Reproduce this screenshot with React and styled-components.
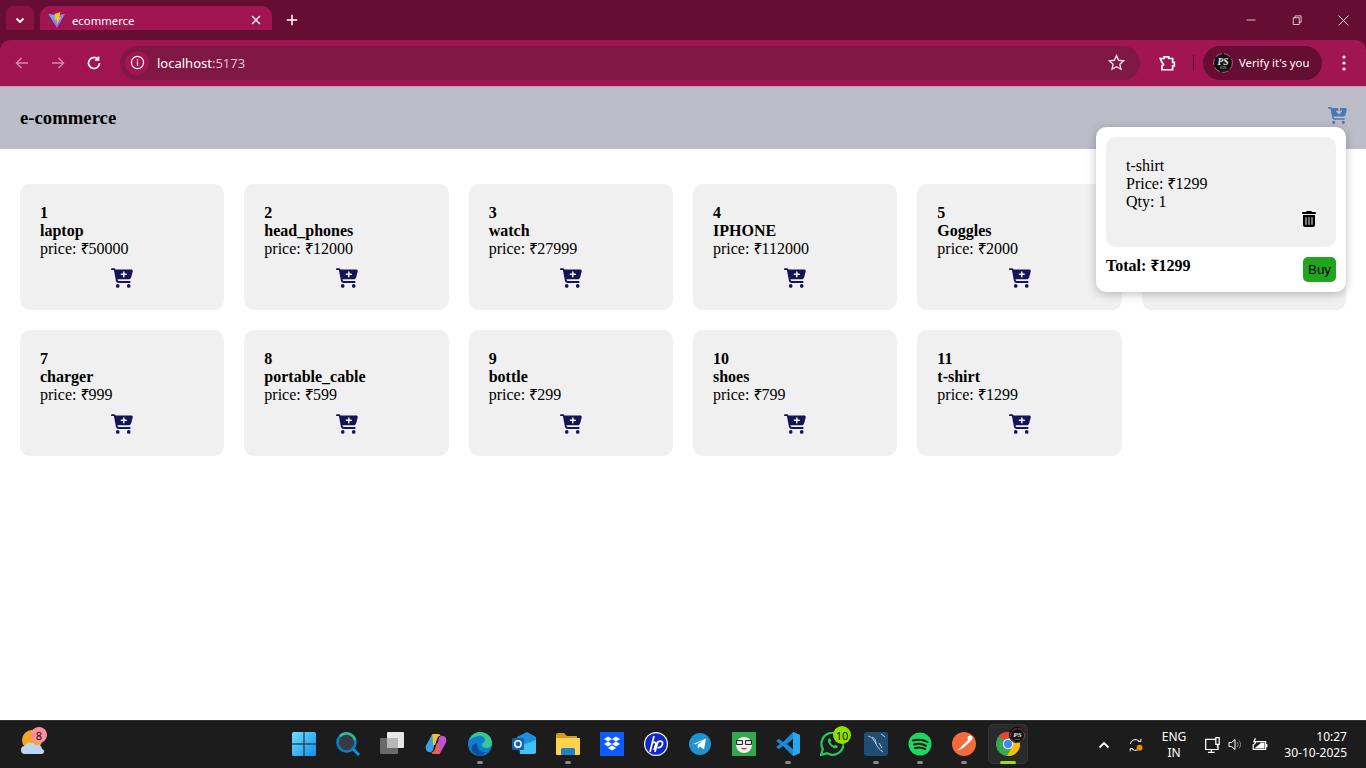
import React from 'react';
import styled, { createGlobalStyle } from 'styled-components';
import { FaCartPlus, FaCartArrowDown, FaTrashCan } from 'react-icons/fa6';

const Global = createGlobalStyle`
  html, body { margin: 0; padding: 0; height: 100%; overflow: hidden; background: #fff; }
  #root { height: 768px; }
  * { box-sizing: border-box; }
`;

const Screen = styled.div`
  width: 1366px; height: 768px; display: flex; flex-direction: column;
  font-family: "Liberation Serif", "Noto Sans", serif; color: #000;
`;

/* ---------- browser chrome ---------- */
const TabStrip = styled.div`
  height: 40px; background: #660d33; display: flex; align-items: flex-end;
  padding-left: 6px; flex: none;
`;
const TabSearch = styled.div`
  width: 28px; height: 28px; margin: 0 6px 6px 0; border-radius: 8px; background: #8a1243;
  display: flex; align-items: center; justify-content: center; flex: none;
`;
const Tab = styled.div`
  position: relative; width: 232px; height: 34px; background: #a11650; border-radius: 10px 10px 0 0;
  display: flex; align-items: center; padding: 0 9px 6px 8px; gap: 6px; flex: none;
  font: 11.3px "Noto Sans", "Open Sans", sans-serif; color: #fff;
  &::before, &::after {
    content: ""; position: absolute; bottom: 0; width: 8px; height: 8px;
  }
  &::before { left: -8px; background: radial-gradient(circle at 0 0, transparent 8px, #a11650 8.5px); }
  &::after { right: -8px; background: radial-gradient(circle at 100% 0, transparent 8px, #a11650 8.5px); }
`;
const TabTitle = styled.span`flex: 1;`;
const NewTab = styled.div`
  width: 40px; height: 34px; padding-bottom: 6px; display: flex; align-items: center; justify-content: center; flex: none;
`;
const WindowControls = styled.div`
  margin-left: auto; display: flex; height: 40px; align-items: center;
`;
const WinButton = styled.div`
  width: 46px; height: 40px; display: flex; align-items: center; justify-content: center;
`;
const Toolbar = styled.div`
  height: 47px; background: #a11650; display: flex; align-items: center; flex: none;
  border-radius: 10px 10px 0 0; padding: 0 0 1px 4px; position: relative;
  border-bottom: 1px solid #c69ab0;
  box-shadow: 0 -10px 0 0 #660d33;
`;
const NavButton = styled.div`
  width: 36px; height: 34px; display: flex; align-items: center; justify-content: center; flex: none;
`;
const Omnibox = styled.div`
  margin-left: 8px; width: 1020px; height: 34px; border-radius: 17px; background: #801845;
  display: flex; align-items: center; padding: 0 15px 0 5px; flex: none;
  font: 13px "Noto Sans", "Open Sans", sans-serif; color: #fff;
`;
const SiteChip = styled.div`
  width: 24px; height: 24px; border-radius: 50%; background: #a11650; margin-right: 8px;
  display: flex; align-items: center; justify-content: center; flex: none;
`;
const Port = styled.span`color: #e0bccb;`;
const OmniEnd = styled.div`margin-left: auto; display: flex; align-items: center;`;
const ExtButton = styled.div`
  width: 36px; margin-left: 9px; display: flex; justify-content: center; flex: none;
`;
const ToolbarDivider = styled.div`
  width: 1px; height: 16px; background: #660d33; margin: 0 9px 0 8px; flex: none;
`;
const Profile = styled.div`
  width: 119px; height: 34px; border-radius: 17px; background: #660d33; flex: none;
  display: flex; align-items: center; padding-left: 10px; gap: 6px;
  font: 11.3px "Noto Sans", "Open Sans", sans-serif; color: #fff; white-space: nowrap;
`;
const MenuDots = styled.div`
  margin-left: 4px; width: 36px; display: flex; justify-content: center; flex: none;
`;

/* ---------- page ---------- */
const Page = styled.div`position: relative; flex: 1; background: #fff; min-height: 0;`;
const Header = styled.header`
  height: 62px; background: #bdbdc9; display: flex; align-items: center; justify-content: space-between;
  padding: 0 20px;
`;
const Brand = styled.h3`margin: 0; font-size: 18.72px; font-weight: 700;`;
const HeaderCart = styled.div`color: #4a78b4; display: flex; margin-bottom: 6px; margin-right: -1px;`;
const Grid = styled.main`
  display: grid; grid-template-columns: repeat(6, 1fr); gap: 20px; padding: 35px 20px 0;
`;
const Card = styled.article`
  height: 126px; background: #f0f0f0; border-radius: 10px; padding: 20px; font-size: 16px; line-height: 18px;
`;
const Strong = styled.div`font-weight: 700;`;
const Rupee = styled.span`margin-right: -1px;`;
const CartBtn = styled.div`
  color: #14145a; display: flex; justify-content: center; margin-top: 9px; padding-left: 0.6px;
`;
const Popup = styled.aside`
  position: absolute; top: 40px; right: 20px; width: 250px; height: 165px; background: #fff; border-radius: 10px;
  box-shadow: 0 2px 10px rgba(0,0,0,.25); padding: 10px; z-index: 2;
`;
const PopupItem = styled.div`
  height: 110px; background: #f0f0f0; border-radius: 10px; padding: 20px 19px 20px 20px; font-size: 16px; line-height: 18px;
  display: flex; justify-content: space-between;
`;
const Trash = styled.div`align-self: flex-end; display: flex;`;
const PopupFoot = styled.div`
  display: flex; justify-content: space-between; align-items: flex-start; margin-top: 10px;
`;
const Total = styled.div`font-weight: 700; font-size: 16px; line-height: 18px;`;
const BuyButton = styled.button`
  width: 33px; height: 25px; border: 0; padding: 0; background: #1fa51f; border-radius: 5px; color: #000;
  font: 13.33px "Liberation Sans", Arial, sans-serif;
`;

/* ---------- taskbar ---------- */
const Taskbar = styled.footer`
  height: 48px; background: #1c1c1c; border-top: 1px solid #333; display: flex; flex: none; position: relative;
`;
const Weather = styled.div`width: 282px; padding: 3px 0 0 20px; flex: none;`;
const Pinned = styled.div`display: flex; flex: none;`;
const Slot = styled.div`
  position: relative; width: 44px; height: 47px; display: flex; align-items: center; justify-content: center;
  padding-bottom: 1px;
`;
const IconHolder = styled.span`position: relative; display: flex;`;
const ActiveTile = styled.div`
  position: absolute; left: 2px; top: 3px; width: 40px; height: 40px; border-radius: 5px;
  background: #2a2a2a; border: 1px solid #333;
`;
const RunDot = styled.span`
  position: absolute; bottom: 4px; left: 50%; transform: translateX(-50%); height: 3px; border-radius: 2px;
  width: ${p => (p.$active ? 16 : 6)}px; background: ${p => (p.$active ? '#9be000' : '#8a8a8a')}; z-index: 1;
`;
const Tray = styled.div`
  margin-left: auto; display: flex; align-items: center; color: #fff; padding-right: 19px;
  font: 12px "Noto Sans", "Open Sans", sans-serif;
`;
const TrayIcon = styled.div`
  width: ${p => p.$w}px; display: flex; justify-content: center; flex: none;
`;
const Lang = styled.div`width: 40px; text-align: center; line-height: 15.5px; flex: none;`;
const Clock = styled.div`width: 77px; text-align: right; line-height: 16px; flex: none;`;
const Spacer = styled.div`width: ${p => p.$w}px; flex: none;`;

const Badge = styled.span`
  position: absolute; border-radius: 50%; display: flex; align-items: center; justify-content: center;
  font: 11px "Noto Sans", sans-serif; color: #111;
  width: ${p => p.$s}px; height: ${p => p.$s}px; background: ${p => p.$bg};
  left: ${p => p.$l}px; top: ${p => p.$t}px;
`;
const WeatherWrap = styled.div`position: relative; width: 30px; height: 30px; margin-top: 5px;`;

/* ---------- drawings ---------- */
const ViteLogo = () => (
  <svg width="18" height="18" viewBox="0 0 18 18" style={{ flex: 'none' }}>
    <defs>
      <linearGradient id="v1" x1="0" y1="0" x2="1" y2="1"><stop offset="0" stopColor="#41d1ff" /><stop offset="1" stopColor="#bd34fe" /></linearGradient>
    </defs>
    <path d="M0.5 3 L8 4.3 L17 3 L9 17 Z" fill="url(#v1)" />
    <path d="M6.5 3 L12.5 1 L11 6.5 L13 6 L8.5 14 L9 8.5 L6.8 9 Z" fill="#ffc517" />
  </svg>
);
const Chevron = ({ up }) => (
  <svg width="12" height="12" viewBox="0 0 12 12" fill="none" stroke="#fff" strokeWidth="1.8">
    <path d={up ? 'M1.5 8.5 L6 4 L10.5 8.5' : 'M2.5 4.5 L6 8 L9.5 4.5'} />
  </svg>
);
const Stroke = ({ w = 16, children, color = '#fff', sw = 1.5 }) => (
  <svg width={w} height={w} viewBox="0 0 16 16" fill="none" stroke={color} strokeWidth={sw}>{children}</svg>
);
const PSAvatar = ({ s = 20 }) => (
  <svg width={s} height={s} viewBox="0 0 20 20">
    <circle cx="10" cy="10" r="9.400" fill="#111" stroke="#c4567f" strokeWidth="1" strokeDasharray="7 2" />
    <text x="10" y="11.500" textAnchor="middle" fontFamily="Liberation Serif, serif" fontStyle="italic" fontWeight="700" fontSize="9.500" fill="#eee">PS</text>
    <text x="10" y="15.500" textAnchor="middle" fontFamily="Liberation Sans, sans-serif" fontSize="3" fill="#bbb">SITE</text>
  </svg>
);

const SIZE = 24;
const Svg = ({ children, size = SIZE }) => <svg width={size} height={size} viewBox="0 0 24 24">{children}</svg>;

const pinned = [
  { id: 'win', icon: <Svg><defs><linearGradient id="w" x1="0" y1="0" x2="1" y2="1"><stop offset="0" stopColor="#6fe0ff" /><stop offset="1" stopColor="#0f8df0" /></linearGradient></defs><path fill="url(#w)" d="M0 1.500a1.500 1.500 0 011.500-1.500H11.500V11.500H0zM12.500 0H22.500A1.500 1.500 0 0124 1.500V11.500H12.500zM0 12.500H11.500V24H1.500A1.500 1.500 0 010 22.500zM12.500 12.500H24V22.500A1.500 1.500 0 0122.500 24H12.500z" /></Svg> },
  { id: 'search', icon: <Svg><circle cx="10.500" cy="10.500" r="9" fill="#333c44" stroke="#0f7fc4" strokeWidth="2.600" /><path d="M4 4A9 9 0 0119 8" fill="none" stroke="#35b88a" strokeWidth="2.600" /><path d="M17 17L23 23" stroke="#1590d8" strokeWidth="3" /></Svg> },
  { id: 'view', icon: <Svg><rect x="7" y="0" width="17" height="16" rx="1" fill="#e8e8e8" /><rect x="0" y="6" width="18" height="16" rx="1" fill="#6a6a6a" /><rect x="7" y="6" width="11" height="10" fill="#b8b8b8" /></Svg> },
  { id: 'copilot', icon: <Svg size={22}><path d="M8 1h5L9 18c-.5 2-2 3-4 3-3 0-5-3-4-7z" fill="#3aa0e8" /><path d="M16 23h-5l4-17c.5-2 2-3 4-3 3 0 5 3 4 7z" fill="#c44fd8" /><path d="M8 1h6c2 0 3 1 3 2-2 0-3 1-4 4l-2 6-2 0z" fill="#f5c030" /><path d="M16 23h-6c-2 0-3-1-3-2 2 0 3-1 4-4l2-6 2 0z" fill="#f0604a" /></Svg> },
  { id: 'edge', dot: true, icon: <Svg><circle cx="12" cy="12" r="12" fill="#0f7fcb" /><path d="M1 9C3 2 9 0 12 0c7 0 12 5 12 11 0 4-3 5-5 5-3 0-5-1-5-3 0-3 3-2 3-5 0-3-4-5-7-4C5 5 2 7 1 9z" fill="#38c88e" /><path d="M9 12c0 5 4 9 9 8-2 3-6 4-9 3C4 21 2 16 5 13c1-1 3-2 4-1z" fill="#0b4f9c" /></Svg> },
  { id: 'outlook', icon: <Svg><path d="M5 5L15 0l9 5v14a3 3 0 01-3 3H8z" fill="#1c8fe0" /><path d="M8 14l16-6v12a2 2 0 01-2 2H8z" fill="#3fc3f3" /><rect x="0" y="6" width="12" height="12" rx="1.500" fill="#0f63b0" /><circle cx="6" cy="12" r="3.200" fill="none" stroke="#fff" strokeWidth="1.500" /></Svg> },
  { id: 'files', dot: true, icon: <Svg><path d="M0 3a2 2 0 012-2h6l3 3h10v5H0z" fill="#d89a18" /><path d="M0 6h24v16a1 1 0 01-1 1H1a1 1 0 01-1-1z" fill="#fdd34e" /><rect x="5" y="16" width="14" height="7" rx="1.500" fill="#1f7fc4" /></Svg> },
  { id: 'dropbox', icon: <Svg><rect width="24" height="24" fill="#0a5cff" /><path d="M8 4.500l4 2.500-4 2.500-4-2.500zM16 4.500l4 2.500-4 2.500-4-2.500zM8 9.500l4 2.500-4 2.500-4-2.500zM16 9.500l4 2.500-4 2.500-4-2.500zM12 13.500l4 2.500-4 2.500-4-2.500z" fill="#fff" /></Svg> },
  { id: 'hp', icon: <Svg><circle cx="12" cy="12" r="12" fill="#fff" /><circle cx="12" cy="12" r="10.800" fill="#1226c9" /><path d="M10 4L6 20M9 11c1-1 3-1 3 1l-2 6M14 9l-3 11M14 10c2-1.500 5-1 4.500 2s-3 4-5 3.500" fill="none" stroke="#fff" strokeWidth="1.700" /></Svg> },
  { id: 'telegram', icon: <Svg><circle cx="12" cy="12" r="11" fill="#1f92d0" /><path d="M5 12L18 6.500l-2 11-4-3-2 2.200-.5-3.700 6-5-7.500 4.300z" fill="#fff" /></Svg> },
  { id: 'emote', icon: <Svg><rect width="24" height="24" fill="#31a84e" /><circle cx="12" cy="13" r="8" fill="#f2f2f2" /><rect x="4" y="8" width="7" height="5" rx="1" fill="#222" /><rect x="13" y="8" width="7" height="5" rx="1" fill="#222" /><rect x="5" y="9" width="5" height="3" fill="#ddd" /><rect x="14" y="9" width="5" height="3" fill="#ddd" /><path d="M9 16c1 2 5 2 6 0z" fill="#c33" /></Svg> },
  { id: 'vscode', dot: true, icon: <Svg><path d="M17 0l7 3v18l-7 3L7 14l-4 3-3-2 4-3-4-3 3-2 4 3z" fill="#1c87d8" /><path d="M17 0l7 3v18l-7 3z" fill="#2aa5ee" /><path d="M17 7l-6 5 6 5z" fill="#1c1c1c" /></Svg> },
  { id: 'whatsapp', badge: '10', icon: <Svg><path d="M1 23l1.800-6A11 11 0 1 1 7 21.300z" fill="#1c1c1c" stroke="#25c85a" strokeWidth="2.200" /><path d="M8 7c1-1 2-1 2.500 0l.8 2-1 1.300c.6 1.500 2 2.800 3.400 3.400l1.300-1 2 .8c1 .5 1 1.500 0 2.500-3 2-11-5-8.800-8.800z" fill="#25c85a" /></Svg> },
  { id: 'mysql', dot: true, icon: <Svg><rect width="24" height="24" rx="3" fill="#1f4e74" /><path d="M4 4c4 1 6 4 8 8s4 6 7 8M12 12c0-3-1-6-4-7M17 2l4 3M15 11l3 5" fill="none" stroke="#b9cfdf" strokeWidth="1" /></Svg> },
  { id: 'spotify', dot: true, icon: <Svg><circle cx="12" cy="12" r="11.500" fill="#1ed760" /><path d="M5 8.500c5-1.500 10-1 14.500 1.500M6 12.500c4-1 8.500-.8 12 1.300M7 16c3.500-.8 7-.5 10 1" fill="none" stroke="#1c1c1c" strokeWidth="2" strokeLinecap="round" /></Svg> },
  { id: 'postman', dot: true, icon: <Svg><circle cx="12" cy="12" r="12" fill="#f26b3a" /><path d="M5 19L17 7l2 2-8 7z" fill="#fff" /><circle cx="18" cy="6" r="2.500" fill="#fff" /></Svg> },
  { id: 'chrome', active: true, icon: (
    <Svg>
      <circle cx="12" cy="12" r="12" fill="#34a853" />
      <path d="M12 0a12 12 0 0110.400 6H12a6 6 0 00-5.200 3L3 3.500A12 12 0 0112 0z" fill="#ea4335" />
      <path d="M22.400 6A12 12 0 0111 24l5.200-9A6 6 0 0012 6z" fill="#fbbc04" />
      <circle cx="12" cy="12" r="5.200" fill="#fff" /><circle cx="12" cy="12" r="4.200" fill="#4285f4" />
    </Svg>
  ) },
];

/* The sixth card lies behind the cart popup: only its bottom edge shows, so it holds no text. */
const products = [
  [1, 'laptop', 50000], [2, 'head_phones', 12000], [3, 'watch', 27999], [4, 'IPHONE', 112000],
  [5, 'Goggles', 2000], [6, null, null], [7, 'charger', 999], [8, 'portable_cable', 599],
  [9, 'bottle', 299], [10, 'shoes', 799], [11, 't-shirt', 1299],
];

export default function App() {
  return (
    <Screen>
      <Global />
      <TabStrip>
        <TabSearch><Chevron /></TabSearch>
        <Tab>
          <ViteLogo />
          <TabTitle>ecommerce</TabTitle>
          <Stroke w={14}><path d="M3.500 3.500l9 9M12.500 3.500l-9 9" /></Stroke>
        </Tab>
        <NewTab><Stroke w={14} sw={1.700}><path d="M8 2v12M2 8h12" /></Stroke></NewTab>
        <WindowControls>
          <WinButton><Stroke w={12} sw={1}><path d="M2 8h12" /></Stroke></WinButton>
          <WinButton><Stroke w={12} sw={1}><path d="M3 5h8v9H3zM5.500 5V2.500h8V11H11" /></Stroke></WinButton>
          <WinButton><Stroke w={13} sw={1.100}><path d="M2 2l12 12M14 2L2 14" /></Stroke></WinButton>
        </WindowControls>
      </TabStrip>
      <Toolbar>
        <NavButton><Stroke color="#cf88a6"><path d="M14 8H2.500M7.500 3l-5 5 5 5" /></Stroke></NavButton>
        <NavButton><Stroke color="#cf88a6"><path d="M2 8h11.500M8.500 3l5 5-5 5" /></Stroke></NavButton>
        <NavButton><Stroke sw={1.700}><path d="M13.500 8A5.500 5.500 0 1 1 11.800 4M12.500 1.500V5H9" /></Stroke></NavButton>
        <Omnibox>
          <SiteChip><Stroke w={15} sw={1.300}><circle cx="8" cy="8" r="6.500" /><path d="M8 7v4.500M8 4.300v1.500" /></Stroke></SiteChip>
          <span>localhost<Port>:5173</Port></span>
          <OmniEnd><Stroke w={17} sw={1.300} color="#eedbe3"><path d="M8 1.500l2 4.400 4.700.5-3.500 3.200 1 4.700L8 12l-4.200 2.300 1-4.700L1.300 6.400 6 5.900z" /></Stroke></OmniEnd>
        </Omnibox>
        <ExtButton><Stroke w={18} sw={1.500}><path d="M2 4h3.500V2.500h4V4H13v3.500h1.500v3H13V14H3.500v-3.500L5 9.500 3 6.500z" /></Stroke></ExtButton>
        <ToolbarDivider />
        <Profile><PSAvatar /><span>Verify it's you</span></Profile>
        <MenuDots><svg width="4" height="16" viewBox="0 0 4 16" fill="#fff"><circle cx="2" cy="2" r="1.600" /><circle cx="2" cy="8" r="1.600" /><circle cx="2" cy="14" r="1.600" /></svg></MenuDots>
      </Toolbar>

      <Page>
        <Header>
          <Brand>e-commerce</Brand>
          <HeaderCart><FaCartArrowDown size={19} /></HeaderCart>
        </Header>
        <Grid>
          {products.map(([id, name, price]) => (
            <Card key={id}>
              {name && (
                <>
                  <Strong>{id}</Strong>
                  <Strong>{name}</Strong>
                  <div>price: <Rupee>₹</Rupee>{price}</div>
                  <CartBtn><FaCartPlus size={22} /></CartBtn>
                </>
              )}
            </Card>
          ))}
        </Grid>
        <Popup>
          <PopupItem>
            <div>t-shirt<br />Price: <Rupee>₹</Rupee>1299<br />Qty: 1</div>
            <Trash><FaTrashCan size={16} /></Trash>
          </PopupItem>
          <PopupFoot>
            <Total>Total: <Rupee>₹</Rupee>1299</Total>
            <BuyButton>Buy</BuyButton>
          </PopupFoot>
        </Popup>
      </Page>

      <Taskbar>
        <Weather>
          <WeatherWrap>
            <svg width="26" height="26" viewBox="0 0 26 26">
              <circle cx="12" cy="11" r="10" fill="#f5a623" />
              <path d="M5 25a4 4 0 010-8c1-4 8-5 10-1 4-1 7 1 7 4a2.500 2.500 0 01-1 5z" fill="#bcd6f2" />
            </svg>
            <Badge $s={16} $bg="#ff8f9a" $l={11} $t={-2}>8</Badge>
          </WeatherWrap>
        </Weather>
        <Pinned>
          {pinned.map(p => (
            <Slot key={p.id}>
              {p.active && <ActiveTile />}
              <IconHolder>{p.icon}</IconHolder>
              {p.badge && <Badge $s={18} $bg="#8fe000" $l={23} $t={5}>{p.badge}</Badge>}
              {p.active && <Badge $s={16} $bg="#000" $l={23} $t={6}><PSAvatar s={15} /></Badge>}
              {(p.dot || p.active) && <RunDot $active={p.active} />}
            </Slot>
          ))}
        </Pinned>
        <Tray>
          <TrayIcon $w={16}><Chevron up /></TrayIcon>
          <Spacer $w={16} />
          <TrayIcon $w={16}>
            <svg width="22" height="22" viewBox="0 0 18 18" fill="none" stroke="#fff" strokeWidth="1.100">
              <path d="M2.500 8a6 6 0 0110-3.500M14.500 2v3h-3M11 14.500A6 6 0 014.500 13.500M2.500 16v-3h3" />
              <circle cx="13" cy="12" r="3.300" fill="#f08a10" stroke="none" />
            </svg>
          </TrayIcon>
          <Spacer $w={10} />
          <Lang>ENG<br />IN</Lang>
          <Spacer $w={9} />
          <TrayIcon $w={20}><Stroke w={18} sw={1.100}><path d="M10 3H1.500v9h11V8M3.500 14.500h6M6.500 12v2.500M10.500 1.500h3v6h-3zM12 7.500v3" /></Stroke></TrayIcon>
          <Spacer $w={4} />
          <TrayIcon $w={16}><Stroke w={17} sw={1}><path d="M2 6v4h2.500L8 13V3L4.500 6z" /><path d="M10 5.500a3.500 3.500 0 010 5M12 4a6 6 0 010 8" stroke="#888" /></Stroke></TrayIcon>
          <Spacer $w={7} />
          <TrayIcon $w={20}><Stroke w={18} sw={1.100}><path d="M5 5h8v7H2V7M14 7v3" /><path d="M3 11l6-5h3v5z" fill="#fff" stroke="none" /><path d="M4 2L2.500 5h2L3 7.500" /></Stroke></TrayIcon>
          <Clock>10:27<br />30-10-2025</Clock>
        </Tray>
      </Taskbar>
    </Screen>
  );
}
